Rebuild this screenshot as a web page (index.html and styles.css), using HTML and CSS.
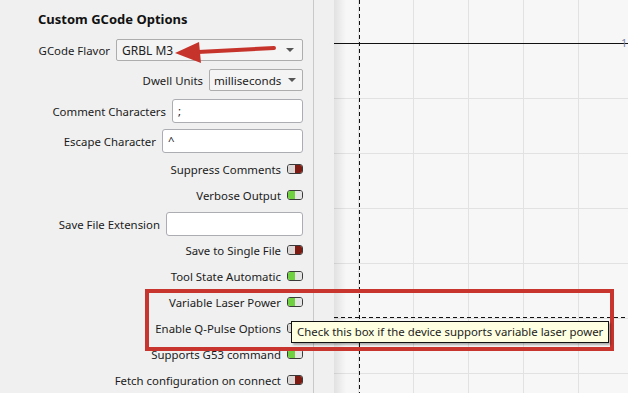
FILE: index.html
```html
<!DOCTYPE html>
<html lang="en">
<head>
    <meta charset="UTF-8">
    <meta name="viewport" content="width=device-width, initial-scale=1.0">
    <title>Custom GCode Options</title>
    <link rel="stylesheet" href="styles.css">
</head>
<body>
    <div class="app">
        <div class="panel">
            <div class="title">Custom GCode Options</div>

            <div class="row row-sel">
                <span class="label">GCode Flavor</span>
                <div class="select w-flavor"><span>GRBL M3</span><i class="caret"></i></div>
            </div>
            <div class="row row-sel">
                <span class="label">Dwell Units</span>
                <div class="select w-dwell"><span>milliseconds</span><i class="caret"></i></div>
            </div>
            <div class="row row-in">
                <span class="label">Comment Characters</span>
                <div class="input w-comment">;</div>
            </div>
            <div class="row row-in last-in">
                <span class="label">Escape Character</span>
                <div class="input w-escape">^</div>
            </div>

            <div class="row row-tg">
                <span class="label">Suppress Comments</span>
                <span class="toggle off"><b></b><b></b></span>
            </div>
            <div class="row row-tg">
                <span class="label">Verbose Output</span>
                <span class="toggle on"><b></b><b></b></span>
            </div>
            <div class="row row-tg ext">
                <span class="label">Save File Extension</span>
                <div class="input w-ext"></div>
            </div>
            <div class="row row-tg">
                <span class="label">Save to Single File</span>
                <span class="toggle off"><b></b><b></b></span>
            </div>
            <div class="row row-tg">
                <span class="label">Tool State Automatic</span>
                <span class="toggle on"><b></b><b></b></span>
            </div>
            <div class="row row-tg">
                <span class="label">Variable Laser Power</span>
                <span class="toggle on"><b></b><b></b></span>
            </div>
            <div class="row row-tg">
                <span class="label">Enable Q-Pulse Options</span>
                <span class="toggle off"><b></b><b></b></span>
            </div>
            <div class="row row-tg">
                <span class="label">Supports G53 command</span>
                <span class="toggle on"><b></b><b></b></span>
            </div>
            <div class="row row-tg">
                <span class="label">Fetch configuration on connect</span>
                <span class="toggle off"><b></b><b></b></span>
            </div>
        </div>

        <div class="strip"></div>

        <div class="canvas">
            <div class="axis-x"></div>
            <div class="dash-v"></div>
            <div class="dash-h"></div>
            <span class="tick">1</span>
        </div>
    </div>

    <!-- annotations drawn over the screenshot -->
    <svg class="arrow" width="110" height="30" viewBox="0 0 110 30">
        <line x1="104" y1="7" x2="28" y2="11" stroke="#c6332b" stroke-width="4" stroke-linecap="round"/>
        <polygon points="5,12 29,1 31,22" fill="#c6332b"/>
    </svg>
    <div class="callout"></div>
    <div class="tooltip">Check this box if the device supports variable laser power</div>
</body>
</html>
```

FILE: styles.css
```css
* {
  box-sizing: border-box;
}
body {
  margin: 0;
  width: 628px;
  height: 393px;
  overflow: hidden;
  font-family: "Noto Sans", "Open Sans", sans-serif;
  font-size: 11.4px;
  color: #1b1b1b;
  background: #f0f0f0;
  position: relative;
}
.app {
  display: flex;
  height: 393px;
}
.panel {
  width: 314px;
  flex: none;
  border-right: 1px solid #c9c9c9;
  padding-right: 10px;
  display: flex;
  flex-direction: column;
}
.title {
  height: 41px;
  line-height: 38px;
  padding-left: 38px;
  font-weight: bold;
  font-size: 13px;
  color: #111;
}
.row {
  display: flex;
  justify-content: flex-end;
  align-items: center;
  gap: 6px;
  flex: none;
}
.row-sel {
  height: 22px;
  margin-bottom: 8px;
}
.row-in {
  height: 24px;
  margin-bottom: 6px;
}
.row-in.last-in {
  margin-bottom: 3px;
}
.row-tg {
  height: 26px;
}
.row-tg.ext {
  margin-top: 3px;
}
.label {
  white-space: nowrap;
}
.select {
  height: 22px;
  border: 1px solid #adadad;
  border-radius: 2px;
  background: #f4f4f4;
  display: flex;
  align-items: center;
  justify-content: space-between;
  padding: 0 8px 0 5px;
  color: #222;
  font-size: 12px;
}
.caret {
  width: 0;
  height: 0;
  border-left: 4px solid transparent;
  border-right: 4px solid transparent;
  border-top: 4px solid #555;
}
.w-flavor { width: 187px; }
.w-dwell { width: 94px; padding-right: 6px; padding-left: 4px; font-size: 11.6px; }
.input {
  height: 24px;
  border: 1px solid #abadb3;
  border-radius: 3px;
  background: #fff;
  padding: 2px 5px;
  line-height: 18px;
}
.w-comment { width: 131px; }
.w-escape { width: 141px; }
.w-ext { width: 137px; }
.toggle {
  display: flex;
  width: 16px;
  height: 10px;
  border: 1px solid #3a3a3a;
  border-radius: 3px;
  overflow: hidden;
}
.toggle b {
  flex: 1;
}
.toggle.off b:first-child { background: #dcd8d8; }
.toggle.off b:last-child { background: #7d1a12; }
.toggle.on b:first-child { background: #6fd13f; }
.toggle.on b:last-child { background: #e4e4e4; }
.strip {
  width: 20px;
  flex: none;
  background: #f0f0f0;
}
.canvas {
  flex: 1;
  position: relative;
  background-color: #f7f7f7;
  background-image:
    linear-gradient(to right, rgba(0,0,0,0.09), rgba(0,0,0,0) 12px),
    linear-gradient(to right, #e2e2e2 1px, transparent 1px),
    linear-gradient(to bottom, #e2e2e2 1px, transparent 1px);
  background-size: 100% 100%, 55px 55px, 55px 55px;
  background-position: 0 0, 24px 43px, 24px 43px;
  background-repeat: no-repeat, repeat, repeat;
}
.axis-x {
  position: absolute;
  left: 0;
  right: 0;
  top: 43px;
  height: 1px;
  background: #111;
}
.dash-v {
  position: absolute;
  left: 25px;
  top: 0;
  bottom: 0;
  width: 1px;
  background: repeating-linear-gradient(to bottom, #111 0 4px, transparent 4px 7px);
}
.dash-h {
  position: absolute;
  left: 0;
  right: 0;
  top: 317px;
  height: 1px;
  background: repeating-linear-gradient(to right, #111 0 4px, transparent 4px 7px);
}
.tick {
  position: absolute;
  left: 287px;
  top: 35px;
  font-size: 11px;
  color: #7d86a8;
}
.arrow {
  position: absolute;
  left: 170px;
  top: 41px;
}
.callout {
  position: absolute;
  left: 145px;
  top: 289px;
  width: 469px;
  height: 62px;
  border: 4px solid #c8352e;
}
.tooltip {
  position: absolute;
  left: 291px;
  top: 321px;
  height: 22px;
  padding: 0 5px;
  line-height: 20px;
  background: #ffffe1;
  border: 1px solid #111;
  color: #222;
  white-space: nowrap;
  box-shadow: 2px 2px 2px rgba(0,0,0,0.3);
}
```
